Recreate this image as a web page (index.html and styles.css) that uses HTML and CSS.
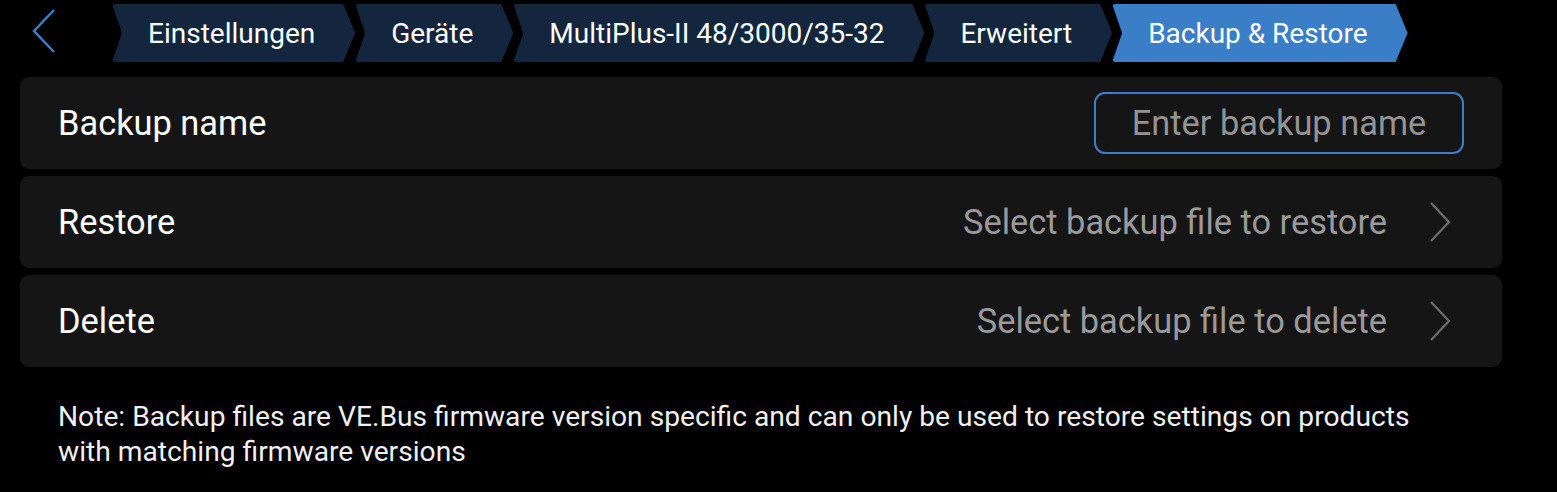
FILE: index.html
```html
<!DOCTYPE html>
<html lang="de">
<head>
<meta charset="utf-8">
<title>Backup &amp; Restore</title>
<link rel="stylesheet" href="styles.css">
</head>
<body>
<header class="topbar">
  <button class="back" aria-label="Zurück">
    <svg width="24" height="44" viewBox="0 0 24 44"><polyline points="22,1 2,22 22,43" fill="none" stroke="#3a80cc" stroke-width="2.4" stroke-linejoin="miter"/></svg>
  </button>
  <nav class="crumbs">
    <span class="crumb">Einstellungen</span>
    <span class="crumb">Geräte</span>
    <span class="crumb">MultiPlus-II 48/3000/35-32</span>
    <span class="crumb">Erweitert</span>
    <span class="crumb active">Backup &amp; Restore</span>
  </nav>
</header>
<main class="content">
  <div class="row">
    <span class="label">Backup name</span>
    <div class="input">Enter backup name</div>
  </div>
  <div class="row">
    <span class="label">Restore</span>
    <span class="value">Select backup file to restore</span>
    <svg class="chev" width="22" height="40" viewBox="0 0 22 40"><polyline points="2,1 20,20 2,39" fill="none" stroke="#6e6e6e" stroke-width="2.2"/></svg>
  </div>
  <div class="row">
    <span class="label">Delete</span>
    <span class="value">Select backup file to delete</span>
    <svg class="chev" width="22" height="40" viewBox="0 0 22 40"><polyline points="2,1 20,20 2,39" fill="none" stroke="#6e6e6e" stroke-width="2.2"/></svg>
  </div>
  <p class="note">Note: Backup files are VE.Bus firmware version specific and can only be used to restore settings on products with matching firmware versions</p>
</main>
</body>
</html>
```

FILE: styles.css
```css
* { box-sizing: border-box; }
html, body {
  margin: 0;
  padding: 0;
  background: #000;
  width: 1557px;
  height: 492px;
  overflow: hidden;
  font-family: Roboto, "Liberation Sans", sans-serif;
  color: #fff;
}
.topbar {
  display: flex;
  align-items: center;
  height: 66px;
  padding-top: 4px;
  padding-bottom: 4px;
}
.back {
  background: none;
  border: 0;
  padding: 0;
  margin-left: 32px;
  width: 24px;
  height: 44px;
  display: flex;
  margin-top: -4px;
}
.crumbs {
  display: flex;
  margin-left: 56px;
  height: 58px;
}
.crumb {
  display: flex;
  align-items: center;
  height: 58px;
  padding: 0 40px 0 36px;
  background: #13263d;
  font-size: 28px;
  color: #fff;
  clip-path: polygon(0 0, calc(100% - 12px) 0, 100% 50%, calc(100% - 12px) 100%, 0 100%, 10px 50%);
  border-radius: 4px;
}
.crumb.active { background: #3a7ec8; }
.content {
  padding: 11px 55px 0 20px;
  display: flex;
  flex-direction: column;
  gap: 7px;
}
.row {
  display: flex;
  align-items: center;
  height: 92px;
  background: #151515;
  border-radius: 9px;
  padding: 0 38px;
}
.label {
  font-size: 34.4px;
  flex: 1;
}
.value {
  font-size: 34.4px;
  color: #9a9a9a;
}
.chev {
  margin-left: 42px;
  margin-right: 13px;
}
.input {
  width: 370px;
  height: 62px;
  border: 2px solid #3b7fc8;
  border-radius: 11px;
  display: flex;
  align-items: center;
  justify-content: center;
  font-size: 34.4px;
  color: #939393;
}
.note {
  margin: 25px 0 0 38px;
  font-size: 28.2px;
  line-height: 35px;
  color: #f0f0f0;
  max-width: 1390px;
}
```
